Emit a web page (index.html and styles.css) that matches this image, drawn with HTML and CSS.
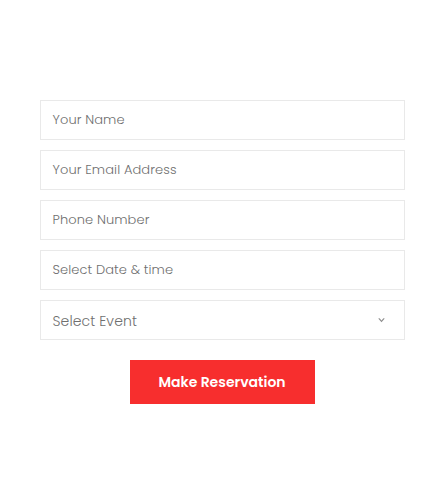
FILE: index.html
```html
<!DOCTYPE html>
<html>
<head>
<meta charset="utf-8">
<link rel="stylesheet" href="styles.css">
</head>
<body>
<form class="form">
  <div class="field"><span class="ph">Your Name</span></div>
  <div class="field"><span class="ph">Your Email Address</span></div>
  <div class="field"><span class="ph">Phone Number</span></div>
  <div class="field"><span class="ph">Select Date &amp; time</span></div>
  <div class="field select"><span class="ph big">Select Event</span>
    <svg class="chev" width="7" height="5" viewBox="0 0 7 5"><path d="M0.2 0.6 L3.5 4.2 L6.8 0.6 L5.4 0.3 L3.5 2.4 L1.6 0.3 Z" fill="#8f8f8f"/></svg>
  </div>
  <div class="actions"><button type="button" class="btn">Make Reservation</button></div>
</form>
</body>
</html>
```
FILE: styles.css
```css
html, body { margin: 0; padding: 0; background: #fff; }
body { font-family: "Poppins", "Open Sans", "Noto Sans", sans-serif; }
.form {
  width: 365px;
  margin: 100px auto 0;
  display: flex;
  flex-direction: column;
  gap: 10px;
}
.field {
  box-sizing: border-box;
  height: 40px;
  border: 1px solid #e9e9e9;
  display: flex;
  align-items: center;
  padding: 0 12px;
}
.ph { color: #6f6f6f; font-size: 13px; font-weight: 300; letter-spacing: 0.1px; }
.ph.big { font-size: 14px; margin-top: 2px; }
.select { justify-content: space-between; padding-right: 19px; }
.chev { display: block; margin-top: 0; }
.actions { display: flex; justify-content: center; margin-top: 10px; }
.btn {
  width: 185px;
  height: 44px;
  border: none;
  background: #f72e2e;
  color: #fff;
  font-family: inherit;
  font-weight: 600;
  font-size: 14px;
  cursor: pointer;
}
```
